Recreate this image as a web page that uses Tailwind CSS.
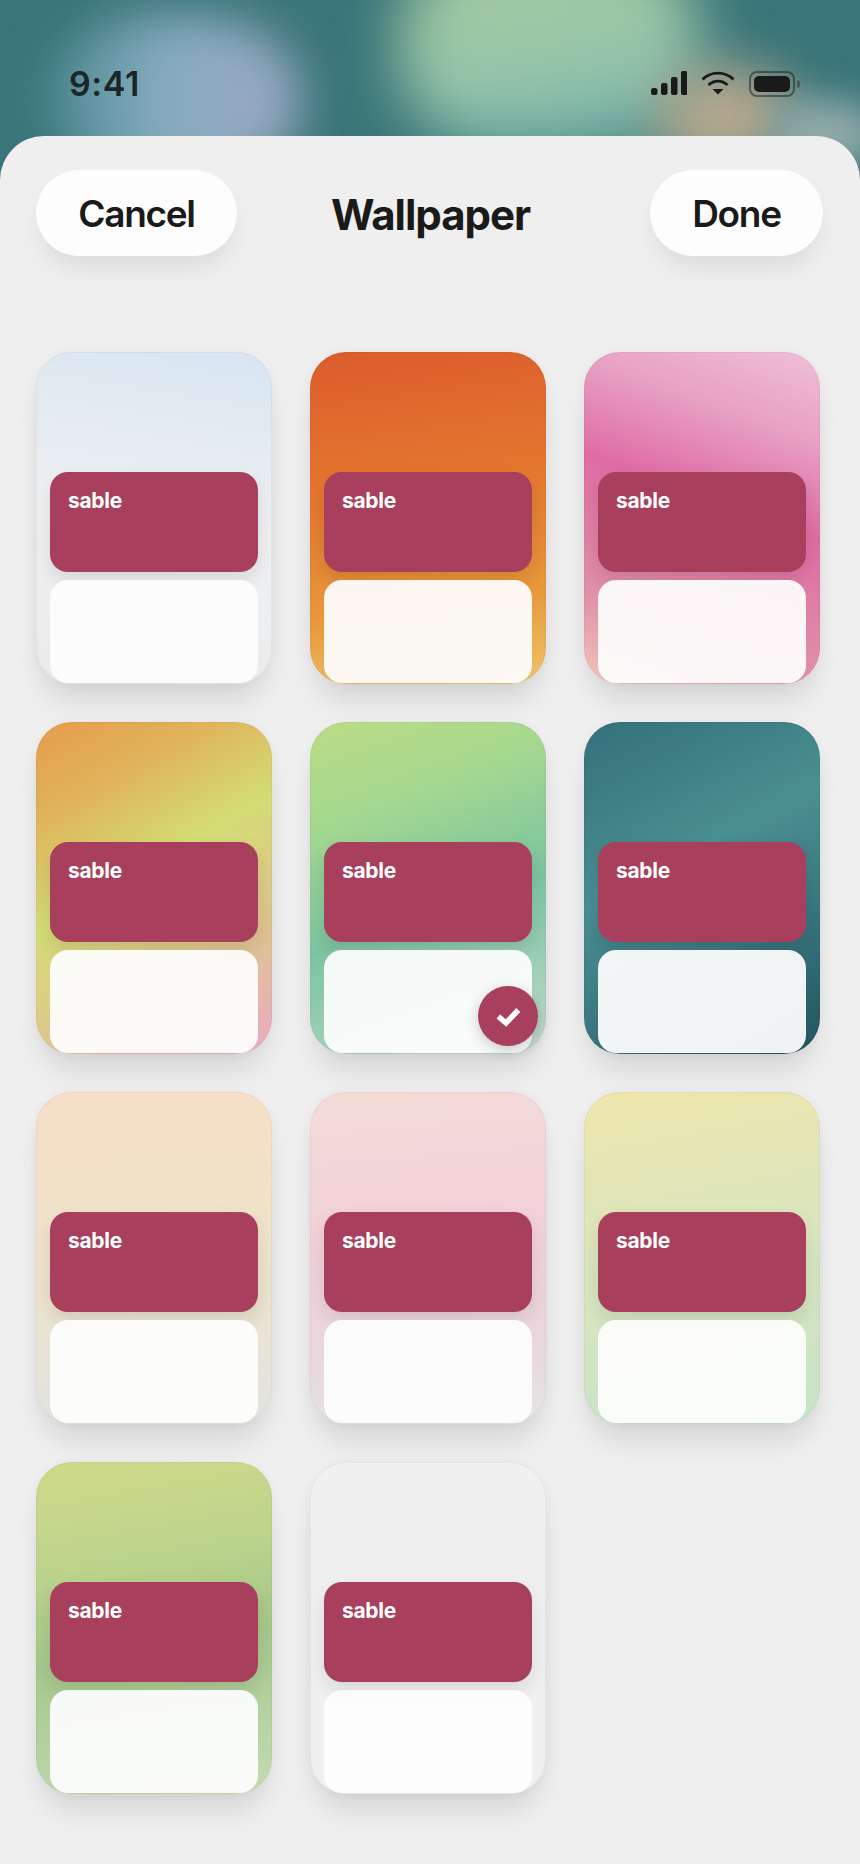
<!DOCTYPE html>
<html lang="en">
<head>
  <meta charset="UTF-8">
  <meta name="viewport" content="width=device-width, initial-scale=1.0">
  <title>Wallpaper</title>
  <script src="https://cdn.jsdelivr.net/npm/@tailwindcss/browser@4"></script>
</head>
<body class="font-['Inter',sans-serif] text-[#1a1a1a]">
  <div class="relative w-[860px] h-[1864px] overflow-hidden bg-[#3a7579] flex flex-col">

    <!-- blurred wallpaper behind the status bar -->
    <div class="absolute left-0 top-0 w-[860px] h-[190px] overflow-hidden">
      <div class="absolute left-[50px] top-[15px] w-[250px] h-[170px] rounded-[45%] bg-[linear-gradient(90deg,#4f8a94,#86acbe_45%,#9ca8c4)] blur-[24px]"></div>
      <div class="absolute left-[400px] top-[-60px] w-[300px] h-[215px] rounded-[40%] bg-[linear-gradient(170deg,#a8cca2_0%,#98c6a8_55%,#7fb8aa_80%,#5f9a9a_100%)] blur-[30px]"></div>
      <div class="absolute left-[655px] top-[68px] w-[140px] h-[100px] rounded-full bg-[#b5a88e] blur-[26px]"></div>
      <div class="absolute left-[770px] top-[100px] w-[110px] h-[70px] rounded-full bg-[#8fa9a8] blur-[18px]"></div>
    </div>

    <!-- status bar -->
    <div class="relative h-[136px] pl-[69px] pr-[60px] pt-[62px] flex justify-between items-start">
      <span class="text-[34px] leading-[44px] font-semibold tracking-[0.6px] text-[#1c2628]">9:41</span>
      <div class="flex items-start gap-[14px] pt-[9px]">
        <svg width="36" height="24" viewBox="0 0 36 24" fill="#1a1a1a">
          <rect x="0" y="17" width="6.5" height="7" rx="2.5"/>
          <rect x="10" y="12" width="6.5" height="12" rx="2"/>
          <rect x="20" y="6" width="6.5" height="18" rx="2"/>
          <rect x="30" y="0" width="6.5" height="24" rx="2"/>
        </svg>
        <svg width="34" height="24" viewBox="0 0 34 24" fill="none" stroke="#1a1a1a" stroke-width="2.8">
          <path d="M1.5 8.5C10 0 24 0 32.5 8.5"/>
          <path d="M7.5 14C13 8.8 21 8.8 26.5 14"/>
          <path d="M11.5 18H22.5L17 23.5Z" fill="#1a1a1a" stroke="none"/>
        </svg>
        <div class="flex items-center gap-[2px]">
          <div class="w-[46px] h-[26px] rounded-[8px] border-2 border-[#1a1a1a]/50 p-[3px]">
            <div class="h-full rounded-[5px] bg-[#1a1a1a]"></div>
          </div>
          <div class="w-[3px] h-[8px] rounded-r-full bg-[#1a1a1a]/40"></div>
        </div>
      </div>
    </div>

    <!-- sheet -->
    <div class="relative flex-1 bg-[#efefef] rounded-t-[44px] pt-[34px] px-[36px]">
      <div class="flex justify-between items-center relative">
        <button class="w-[201px] h-[86px] pt-[2px] rounded-full bg-[#fdfdfd] text-[37px] font-semibold tracking-[-1.3px] shadow-[0_16px_26px_-6px_rgba(0,0,0,0.09)]">Cancel</button>
        <h1 class="absolute left-[295px] mt-[2px] text-[42px] font-bold tracking-[-1px]">Wallpaper</h1>
        <button class="w-[173px] h-[86px] pt-[2px] mr-[1px] rounded-full bg-[#fdfdfd] text-[37px] font-semibold tracking-[-1.3px] shadow-[0_16px_26px_-6px_rgba(0,0,0,0.09)]">Done</button>
      </div>

      <div class="mt-[96px] grid grid-cols-[236px_236px_236px] gap-[38px]">

        <div class="h-[332px] rounded-[36px] border border-black/[0.04] bg-origin-border bg-[linear-gradient(190deg,#d8e6f2_0%,#eef0f2_50%,#ebebeb_100%)] shadow-[0_22px_30px_-8px_rgba(0,0,0,0.12),0_0_12px_rgba(0,0,0,0.04)] px-[13px] pt-[119px] flex flex-col gap-[8px]">
          <div class="h-[100px] rounded-[18px] bg-[#a83f5c] px-[18px] py-[14px] text-[21px] leading-[30px] font-bold tracking-[-0.3px] text-white shadow-[0_8px_18px_rgba(0,0,0,0.1)]">sable</div>
          <div class="h-[104px] rounded-[18px] bg-[#fdfdfd]/94"></div>
        </div>

        <div class="h-[332px] rounded-[36px] border border-black/[0.04] bg-origin-border bg-[linear-gradient(172deg,#dc5c2c_0%,#e57a30_45%,#e89a3c_75%,#eec46c_100%)] shadow-[0_22px_30px_-8px_rgba(0,0,0,0.12),0_0_12px_rgba(0,0,0,0.04)] px-[13px] pt-[119px] flex flex-col gap-[8px]">
          <div class="h-[100px] rounded-[18px] bg-[#a83f5c] px-[18px] py-[14px] text-[21px] leading-[30px] font-bold tracking-[-0.3px] text-white shadow-[0_8px_18px_rgba(0,0,0,0.1)]">sable</div>
          <div class="h-[104px] rounded-[18px] bg-[#fdfdfd]/94"></div>
        </div>

        <div class="h-[332px] rounded-[36px] border border-black/[0.04] bg-origin-border bg-[linear-gradient(200deg,#efc0d6_0%,#e8a0c4_22%,#df6ca4_45%,#e090a8_78%,#f0c6b8_100%)] shadow-[0_22px_30px_-8px_rgba(0,0,0,0.12),0_0_12px_rgba(0,0,0,0.04)] px-[13px] pt-[119px] flex flex-col gap-[8px]">
          <div class="h-[100px] rounded-[18px] bg-[#a83f5c] px-[18px] py-[14px] text-[21px] leading-[30px] font-bold tracking-[-0.3px] text-white shadow-[0_8px_18px_rgba(0,0,0,0.1)]">sable</div>
          <div class="h-[104px] rounded-[18px] bg-[#fdfdfd]/94"></div>
        </div>

        <div class="h-[332px] rounded-[36px] border border-black/[0.04] bg-origin-border bg-[linear-gradient(150deg,#e69c4c_0%,#e0b45c_22%,#d4dc74_44%,#dfc490_72%,#eaaac4_100%)] shadow-[0_22px_30px_-8px_rgba(0,0,0,0.12),0_0_12px_rgba(0,0,0,0.04)] px-[13px] pt-[119px] flex flex-col gap-[8px]">
          <div class="h-[100px] rounded-[18px] bg-[#a83f5c] px-[18px] py-[14px] text-[21px] leading-[30px] font-bold tracking-[-0.3px] text-white shadow-[0_8px_18px_rgba(0,0,0,0.1)]">sable</div>
          <div class="h-[104px] rounded-[18px] bg-[#fdfdfd]/94"></div>
        </div>

        <div class="relative h-[332px] rounded-[36px] border border-black/[0.04] bg-origin-border bg-[linear-gradient(160deg,#bcdc84_0%,#a4d890_26%,#7cc4a0_56%,#a0d0b8_80%,#c8d8d0_100%)] shadow-[0_22px_30px_-8px_rgba(0,0,0,0.12),0_0_12px_rgba(0,0,0,0.04)] px-[13px] pt-[119px] flex flex-col gap-[8px]">
          <div class="h-[100px] rounded-[18px] bg-[#a83f5c] px-[18px] py-[14px] text-[21px] leading-[30px] font-bold tracking-[-0.3px] text-white shadow-[0_8px_18px_rgba(0,0,0,0.1)]">sable</div>
          <div class="h-[104px] rounded-[18px] bg-[#fdfdfd]/94"></div>
          <div class="absolute right-[7px] bottom-[7px] w-[60px] h-[60px] rounded-full bg-[#a83f5c] flex items-center justify-center shadow-[0_4px_14px_rgba(0,0,0,0.2)]">
            <svg width="60" height="60" viewBox="0 0 60 60" fill="none" stroke="white" stroke-width="5.5">
              <path d="M20.3 30.5L28 37L40.3 24"/>
            </svg>
          </div>
        </div>

        <div class="h-[332px] rounded-[36px] border border-black/[0.04] bg-origin-border bg-[linear-gradient(152deg,#35707a_0%,#3f8086_22%,#4a8f92_41%,#3a7680_68%,#21525e_100%)] shadow-[0_22px_30px_-8px_rgba(0,0,0,0.12),0_0_12px_rgba(0,0,0,0.04)] px-[13px] pt-[119px] flex flex-col gap-[8px]">
          <div class="h-[100px] rounded-[18px] bg-[#a83f5c] px-[18px] py-[14px] text-[21px] leading-[30px] font-bold tracking-[-0.3px] text-white shadow-[0_8px_18px_rgba(0,0,0,0.1)]">sable</div>
          <div class="h-[104px] rounded-[18px] bg-[#fdfdfd]/94"></div>
        </div>

        <div class="h-[332px] rounded-[36px] border border-black/[0.04] bg-origin-border bg-[linear-gradient(175deg,#f6dfc6_0%,#efe3ca_50%,#e3e3dc_90%)] shadow-[0_22px_30px_-8px_rgba(0,0,0,0.12),0_0_12px_rgba(0,0,0,0.04)] px-[13px] pt-[119px] flex flex-col gap-[8px]">
          <div class="h-[100px] rounded-[18px] bg-[#a83f5c] px-[18px] py-[14px] text-[21px] leading-[30px] font-bold tracking-[-0.3px] text-white shadow-[0_8px_18px_rgba(0,0,0,0.1)]">sable</div>
          <div class="h-[104px] rounded-[18px] bg-[#fdfdfd]/94"></div>
        </div>

        <div class="h-[332px] rounded-[36px] border border-black/[0.04] bg-origin-border bg-[linear-gradient(175deg,#f4dcd8_0%,#f2d0d8_45%,#e9d6dc_75%,#e6e4e4_100%)] shadow-[0_22px_30px_-8px_rgba(0,0,0,0.12),0_0_12px_rgba(0,0,0,0.04)] px-[13px] pt-[119px] flex flex-col gap-[8px]">
          <div class="h-[100px] rounded-[18px] bg-[#a83f5c] px-[18px] py-[14px] text-[21px] leading-[30px] font-bold tracking-[-0.3px] text-white shadow-[0_8px_18px_rgba(0,0,0,0.1)]">sable</div>
          <div class="h-[104px] rounded-[18px] bg-[#fdfdfd]/94"></div>
        </div>

        <div class="h-[332px] rounded-[36px] border border-black/[0.04] bg-origin-border bg-[linear-gradient(170deg,#efe6ac_0%,#dde6bc_40%,#c6e4c8_100%)] shadow-[0_22px_30px_-8px_rgba(0,0,0,0.12),0_0_12px_rgba(0,0,0,0.04)] px-[13px] pt-[119px] flex flex-col gap-[8px]">
          <div class="h-[100px] rounded-[18px] bg-[#a83f5c] px-[18px] py-[14px] text-[21px] leading-[30px] font-bold tracking-[-0.3px] text-white shadow-[0_8px_18px_rgba(0,0,0,0.1)]">sable</div>
          <div class="h-[104px] rounded-[18px] bg-[#fdfdfd]/94"></div>
        </div>

        <div class="h-[332px] rounded-[36px] border border-black/[0.04] bg-origin-border bg-[linear-gradient(170deg,#d0da88_0%,#bcd48c_30%,#a6c78a_55%,#c4dcb4_100%)] shadow-[0_22px_30px_-8px_rgba(0,0,0,0.12),0_0_12px_rgba(0,0,0,0.04)] px-[13px] pt-[119px] flex flex-col gap-[8px]">
          <div class="h-[100px] rounded-[18px] bg-[#a83f5c] px-[18px] py-[14px] text-[21px] leading-[30px] font-bold tracking-[-0.3px] text-white shadow-[0_8px_18px_rgba(0,0,0,0.1)]">sable</div>
          <div class="h-[104px] rounded-[18px] bg-[#fdfdfd]/94"></div>
        </div>

        <div class="h-[332px] rounded-[36px] border border-black/[0.04] bg-[#f0f0f0] shadow-[0_22px_30px_-8px_rgba(0,0,0,0.12),0_0_12px_rgba(0,0,0,0.04)] px-[13px] pt-[119px] flex flex-col gap-[8px]">
          <div class="h-[100px] rounded-[18px] bg-[#a83f5c] px-[18px] py-[14px] text-[21px] leading-[30px] font-bold tracking-[-0.3px] text-white shadow-[0_8px_18px_rgba(0,0,0,0.1)]">sable</div>
          <div class="h-[104px] rounded-[18px] bg-[#fdfdfd]/94"></div>
        </div>

      </div>
    </div>
  </div>
</body>
</html>
